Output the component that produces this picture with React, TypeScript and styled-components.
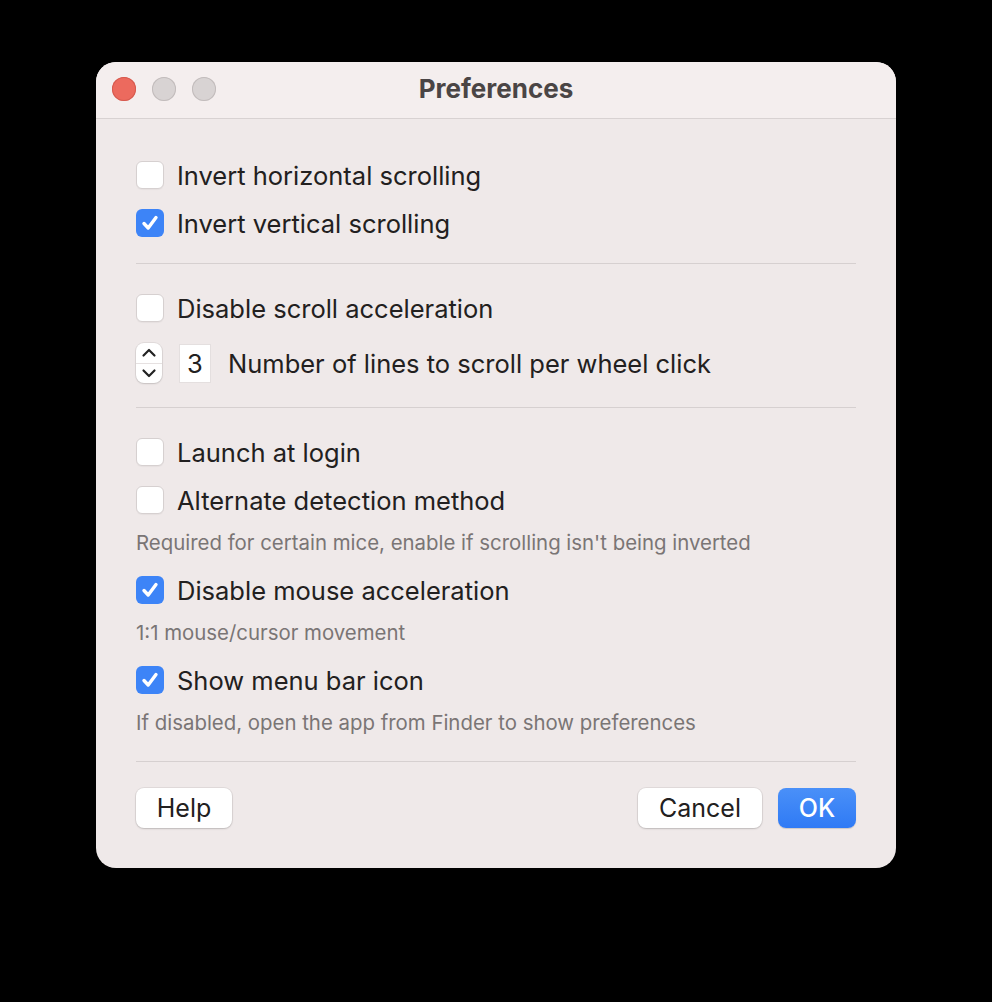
import React from 'react'
import styled, { createGlobalStyle } from 'styled-components'

const GlobalStyle = createGlobalStyle`
  html, body {
    margin: 0;
    padding: 0;
    background: #000;
  }
  body {
    font-family: Inter, "Noto Sans", "Liberation Sans", sans-serif;
    -webkit-font-smoothing: antialiased;
  }
`

const Page = styled.div`
  width: 992px;
  height: 1002px;
  padding: 62px 0 0 96px;
  box-sizing: border-box;
`

const Window = styled.div`
  width: 800px;
  height: 806px;
  border-radius: 20px;
  background: #efe9e9;
  overflow: hidden;
  display: flex;
  flex-direction: column;
`

const TitleBar = styled.div`
  height: 57px;
  flex-shrink: 0;
  box-sizing: border-box;
  padding: 0 0 3px 16px;
  background: #f4eeee;
  border-bottom: 1px solid #d8d2d2;
  display: flex;
  align-items: center;
  position: relative;
`

const Lights = styled.div`
  display: flex;
  gap: 16px;
`

const Light = styled.span<{ $color: string; $border: string }>`
  width: 24px;
  height: 24px;
  border-radius: 50%;
  background: ${({ $color }) => $color};
  box-shadow: inset 0 0 0 1px ${({ $border }) => $border};
`

const Title = styled.div`
  position: absolute;
  left: 0;
  right: 0;
  text-align: center;
  font-size: 26px;
  font-weight: 700;
  color: #4a4545;
  pointer-events: none;
`

const Content = styled.div`
  flex: 1;
  display: flex;
  flex-direction: column;
  padding: 32px 40px 40px;
`

const Row = styled.label<{ $mt?: number }>`
  height: 48px;
  display: flex;
  align-items: center;
  gap: 13px;
  margin-top: ${({ $mt }) => $mt ?? 0}px;
  font-size: 25.5px;
  color: #222020;
`

const Box = styled.span<{ $checked?: boolean }>`
  width: 28px;
  height: 28px;
  border-radius: 6px;
  box-sizing: border-box;
  display: flex;
  align-items: center;
  justify-content: center;
  background: ${({ $checked }) => ($checked ? '#3d84f7' : '#ffffff')};
  border: ${({ $checked }) => ($checked ? 'none' : '1px solid #d6d0d0')};
  box-shadow: ${({ $checked }) => ($checked ? 'none' : '0 1px 1px rgba(0,0,0,0.04)')};
`

const Divider = styled.div<{ $mt: number; $mb: number }>`
  height: 1px;
  background: #d6d0d0;
  margin-top: ${({ $mt }) => $mt}px;
  margin-bottom: ${({ $mb }) => $mb}px;
`

const Help = styled.div<{ $mt: number }>`
  height: 24px;
  line-height: 24px;
  font-size: 20.4px;
  color: #7a7575;
  margin-top: ${({ $mt }) => $mt}px;
`

const Stepper = styled.span`
  width: 26px;
  height: 40px;
  border-radius: 8px;
  background: #fff;
  box-shadow: 0 0 0 1px rgba(0,0,0,0.06), 0 1px 2px rgba(0,0,0,0.12);
  display: flex;
  flex-direction: column;
  align-items: center;
  justify-content: space-between;
  padding: 4px 0;
  box-sizing: border-box;
  position: relative;
  &::after {
    content: '';
    position: absolute;
    left: 0;
    right: 0;
    top: 50%;
    height: 1px;
    background: #e6e1e1;
  }
`

const NumberField = styled.span`
  width: 32px;
  height: 39px;
  background: #fff;
  border: 1px solid #e4dfdf;
  box-sizing: border-box;
  display: flex;
  align-items: center;
  justify-content: center;
  font-size: 25.5px;
  color: #222020;
  margin-left: 4px;
  margin-right: 4px;
`

const Footer = styled.div`
  margin-top: 26px;
  display: flex;
  align-items: center;
  gap: 16px;
`

const Spacer = styled.div`
  flex: 1;
`

const Button = styled.button<{ $primary?: boolean; $w: number }>`
  height: 40px;
  width: ${({ $w }) => $w}px;
  border: none;
  border-radius: 8px;
  font-family: inherit;
  font-size: 25px;
  font-weight: ${({ $primary }) => ($primary ? 500 : 400)};
  padding: 0;
  color: ${({ $primary }) => ($primary ? '#fff' : '#222020')};
  background: ${({ $primary }) => ($primary ? 'linear-gradient(#4a90f8, #2f7af5)' : '#fff')};
  box-shadow: ${({ $primary }) =>
    $primary ? '0 1px 1px rgba(0,0,0,0.15)' : '0 0 0 1px rgba(0,0,0,0.06), 0 1px 2px rgba(0,0,0,0.15)'};
`

const Check = () => (
  <svg width="22" height="22" viewBox="0 0 22 22">
    <path d="M5 11.5l4.2 4.5L17 5.5" fill="none" stroke="#fff" strokeWidth="3.4" strokeLinecap="round" strokeLinejoin="round" />
  </svg>
)

const Chevron = ({ up }: { up?: boolean }) => (
  <svg width="16" height="11" viewBox="0 0 16 11">
    <path
      d={up ? 'M2.5 8.5l5.5-5.5 5.5 5.5' : 'M2.5 2.5l5.5 5.5 5.5-5.5'}
      fill="none"
      stroke="#222"
      strokeWidth="2.2"
      strokeLinecap="round"
      strokeLinejoin="round"
    />
  </svg>
)

function CheckRow({ label, checked, mt }: { label: string; checked?: boolean; mt?: number }) {
  return (
    <Row $mt={mt}>
      <Box $checked={checked}>{checked && <Check />}</Box>
      {label}
    </Row>
  )
}

export default function App() {
  return (
    <Page>
      <GlobalStyle />
      <Window>
        <TitleBar>
          <Lights>
            <Light $color="#ec6a5e" $border="#d55a4f" />
            <Light $color="#d8d3d3" $border="#c2bcbc" />
            <Light $color="#d8d3d3" $border="#c2bcbc" />
          </Lights>
          <Title>Preferences</Title>
        </TitleBar>
        <Content>
          <CheckRow label="Invert horizontal scrolling" />
          <CheckRow label="Invert vertical scrolling" checked />
          <Divider $mt={16} $mb={20} />
          <CheckRow label="Disable scroll acceleration" />
          <Row $mt={7}>
            <Stepper>
              <Chevron up />
              <Chevron />
            </Stepper>
            <NumberField>3</NumberField>
            Number of lines to scroll per wheel click
          </Row>
          <Divider $mt={20} $mb={20} />
          <CheckRow label="Launch at login" />
          <CheckRow label="Alternate detection method" />
          <Help $mt={7}>Required for certain mice, enable if scrolling isn't being inverted</Help>
          <CheckRow label="Disable mouse acceleration" checked mt={11} />
          <Help $mt={7}>1:1 mouse/cursor movement</Help>
          <CheckRow label="Show menu bar icon" checked mt={11} />
          <Help $mt={7}>If disabled, open the app from Finder to show preferences</Help>
          <Divider $mt={26} $mb={0} />
          <Footer>
            <Button $w={96}>Help</Button>
            <Spacer />
            <Button $w={124}>Cancel</Button>
            <Button $w={78} $primary>
              OK
            </Button>
          </Footer>
        </Content>
      </Window>
    </Page>
  )
}
